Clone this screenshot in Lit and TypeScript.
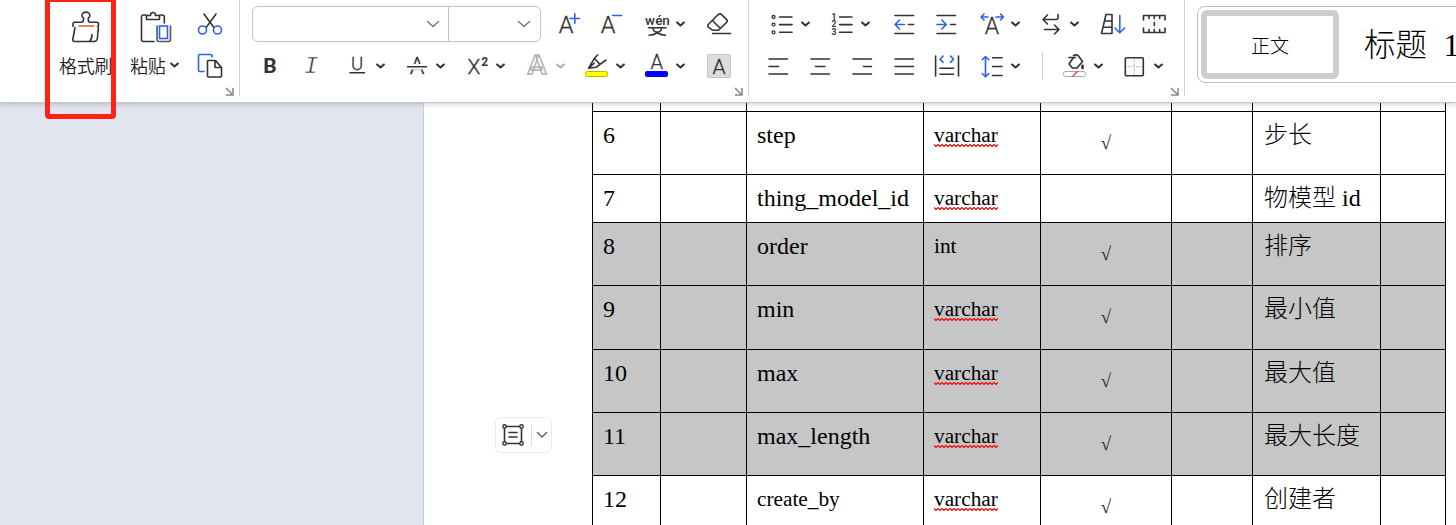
import { LitElement, html, svg, css, nothing } from "lit";
import { customElement } from "lit/decorators.js";

const INK = "#333";
const BLUE = "#2b62e8";

// Each icon is drawn in ribbon coordinates; the cell is a window of width w onto them.
const cell = (x: number, w: number, y: number, body: unknown, h = 42) =>
  html`<svg class="ic" width=${w} height=${h} viewBox="${x} ${y} ${w} ${h}">${body}</svg>`;
const line = (d: string, color = INK, w = 1.6) =>
  svg`<path d=${d} fill="none" stroke=${color} stroke-width=${w} stroke-linecap="round" stroke-linejoin="round"/>`;
const chev = (x: number, y: number, color = INK) =>
  line(`M${x - 3.4} ${y - 1.5}l3.4 3 3.4-3`, color, 2.1);
const glyph = (x: number, y: number, size: number, ch: string, cls = "g", color = INK) =>
  svg`<text class=${cls} x=${x} y=${y} font-size=${size} fill=${color} text-anchor="middle">${ch}</text>`;

const T = 3;
const B = 45;

const brush = cell(59, 54, 3, svg`
  ${line("M73 26.500V23.800q0-1.600 1.600-1.600h6.600q2.300 0 2.300-2.200v-1.800q-1.600-1-1.600-2.600a4 3.500 0 0 1 8 0q0 1.600-1.600 2.600v1.800q0 2.200 2.300 2.200h6.300q1.600 0 1.600 1.600v1.700q0 1-1 1M75 27.500L72.800 39.500q0 2 1.700 2H94q3 0 3.400-3.500L98.400 27.500M92 34.500q0 4.500-2.500 7")}
  ${line("M79 26h14.500", "#d4622a")}`);
const paste = cell(130, 50, 3, svg`
  ${line("M146 15h-2.500q-2 0-2 2v22.500q0 2 2 2H154M160 15h2q2.300 0 2.300 2v6")}
  ${line("M146.500 19.500v-4h4q0-3 2.500-3t2.500 3h4v4z")}
  ${line("M157 26v13.500q0 2 2 2h9.500q2 0 2-2V26", "#555")}
  <rect x="159.500" y="26" width="8" height="12.500" fill="none" stroke=${BLUE} stroke-width="1.600"/>`);
const cut = cell(197, 26, 3, svg`
  ${line("M204 14l9.500 13M216 14l-9.500 13")}
  <circle cx="202.500" cy="30" r="4" fill="none" stroke=${BLUE} stroke-width="1.600"/>
  <circle cx="217.500" cy="30" r="4" fill="none" stroke=${BLUE} stroke-width="1.600"/>`);
const copy = cell(197, 26, B, svg`
  ${line("M204 71.500h-4.500q-1 0-1-1V55.500q0-1 1-1H211q1 0 1 1V57", BLUE)}
  ${line("M208 60.500h7.500l6 7v8.500q0 1-1 1H208.500q-1 0-1-1V61.500q0-1 .5-1zM215 60.500v7h6.500")}`);

const fontTop = [
  cell(551, 42, T, svg`${glyph(566, 33, 23.5, "A")}${line("M570 18.500h9.500M574.800 13.700v9.600", BLUE)}`),
  cell(593, 42, T, svg`${glyph(608, 33, 23.5, "A")}${line("M612.500 15.500h9", BLUE)}`),
  cell(635, 56, T, svg`${glyph(657.5, 25, 13.5, "wén", "w")}${line("M648.500 27.800h17.500M653 28.500a4.300 4.300 0 0 0 8.500 0M649 35.300q4.500-.3 8.300-2.600q3.800 2.300 8.200 2.600")}${chev(680.5, 24)}`),
  cell(691, 50, T, svg`${line("M708.300 24.500l9.700-9.700q2-1.800 3.800 0l4.500 4.300q1.800 1.800 0 3.600l-7.800 7.500h-6l-4.200-3q-1-1.300 0-2.700zM712.700 20.800l7.500 7.500M712.500 33.500h18")}`),
];
const fontBottom = [
  cell(252, 36, B, glyph(270, 73, 21, "B", "b")),
  cell(288, 48, B, svg`<text class="i" x="311.300" y="73" font-size="24" text-anchor="middle">I</text>`),
  cell(336, 60, B, svg`${glyph(357, 69.500, 18.5, "U")}${line("M350 72.800h14.500")}${chev(380.5, 66)}`),
  cell(396, 60, B, svg`${glyph(417, 73.5, 23.5, "A")}<path d="M406 66.700h22" stroke="#fff" stroke-width="5.500"/>${line("M407.500 66.700h19")}${chev(440.5, 66)}`),
  cell(456, 60, B, svg`${glyph(474, 74, 21, "X")}${glyph(484.8, 66, 12, "2", "b")}${chev(500.5, 66)}`),
  cell(516, 60, B, svg`<text class="o" x="527.500" y="74" font-size="25" textLength="19" lengthAdjust="spacingAndGlyphs">A</text>${chev(560.5, 66, "#b0b0b0")}`),
  cell(576, 60, B, svg`${line("M597.700 55l-3.400 3.300-5.800 10 7.500-1L606 60M594.300 58.300l5.700 6.200M589 68l5.200-5")}
    <rect x="585.500" y="71.500" width="22" height="5" rx="1.800" fill="#ff0" stroke="#b9b900"/>${chev(620.5, 66)}`),
  cell(636, 60, B, svg`${glyph(656.7, 69, 20, "A")}<rect x="645" y="71" width="23" height="6" rx="2" fill="#00f"/>${chev(680.5, 66)}`),
  cell(696, 45, B, svg`<rect x="707.500" y="54.500" width="23" height="23" rx="1" fill="#dcdcdc" stroke="#c6c6c6"/>${glyph(719, 73.5, 21, "A")}`),
];
const rules = (a: number, b: number, c: number, d: number) =>
  line(`M${a} 59h${b - a}M${c} 66.500h${d - c}M${a} 74h${b - a}`);
const paraTop = [
  cell(761, 60, T, svg`${[17, 24.6, 32.3].map((y) => svg`<circle cx="773.500" cy=${y} r="1.500" fill="none" stroke=${INK} stroke-width="1.300"/>`)}
    ${line("M779.500 17h12.500M779.500 24.600h12.500M779.500 32.300h12.500")}${chev(805.5, 24)}`),
  cell(821, 62, T, svg`${["1", "2", "3"].map((n, k) => glyph(834, 19.5 + k * 7.6, 8.5, n, "b"))}
    ${line("M839.500 17h12.500M839.500 24.600h12.500M839.500 32.300h12.500")}${chev(865.5, 24)}`),
  cell(883, 42, T, svg`${line("M895 15.500h18.500M908.500 24.500h5M895 33.500h18.500")}${line("M904.500 24.500h-9M899.500 20l-4.500 4.500 4.500 4.500", BLUE)}`),
  cell(925, 42, T, svg`${line("M937 15.500h18.500M950.500 24.500h5M937 33.500h18.500")}${line("M937 24.500h9M941.800 20l4.500 4.500-4.500 4.500", BLUE)}`),
  cell(967, 60, T, svg`${glyph(992, 34, 23, "A")}${line("M988 17h-7M984 14l-3 3 3 3M996 17h7.500M1000.500 14l3 3-3 3", BLUE)}${chev(1015.5, 24)}`),
  cell(1027, 64, T, svg`${line("M1058 14.500v3q0 2-2 2h-13M1047.500 15l-4.500 4.500 4.500 4.500M1044.500 29.500h14.500M1054.500 25l4.500 4.500-4.500 4.500")}${chev(1074.5, 24)}`),
  cell(1091, 40, T, svg`${line("M1112 14.500v19h-10.500l4.500-19zM1104.500 21h7.500M1103 27.300h9")}${line("M1119.800 15.500v17M1115 28l4.800 4.800 4.800-4.800", BLUE)}`),
  cell(1131, 46, T, svg`${line("M1143.500 20V15.500h21.500V20M1143.500 28v4.500h21.500V28M1149 16v2.500M1154.300 16v2.500M1159.700 16v2.500M1149 32v-2.500M1154.300 32v-2.500M1159.700 32v-2.500M1154.300 22.500v3")}`),
];
const paraBottom = [
  cell(761, 38, B, rules(769, 787.5, 769, 778.5)),
  cell(799, 42, B, rules(811, 829.5, 815.5, 825)),
  cell(841, 42, B, rules(853, 871.5, 863.5, 871.5)),
  cell(883, 42, B, rules(895, 913.5, 895, 913.5)),
  cell(925, 48, B, svg`${line("M935.600 56v20M958.500 56v20M940 68.300h13.500M940 74.300h13.500")}${line("M943 56l-3 3.200 3 3.200M950.500 56l3 3.200-3 3.200", BLUE)}`),
  cell(973, 60, B, svg`${line("M985.500 57v19M982.200 59.700l3.300-3.200 3.300 3.200M982.200 73.500l3.300 3.200 3.300-3.200", BLUE)}${line("M992.500 57.700h9.500M992.500 66.500h9.500M992.500 75.500h9.500")}${chev(1015.5, 66)}`),
  cell(1033, 20, B, svg`<path d="M1042.500 52v27.500" stroke="#d0d0d0"/>`),
  cell(1053, 60, B, svg`${line("M1069 57.500h6.500M1073.500 55.500q3-1.500 5 .5l4 5.500-5.500 6.500h-4.500l-3.500-4 4.500-6.500")}
    ${line("M1082.500 65.800v2.200", INK, 2.6)}
    <rect x="1063.500" y="71.500" width="22" height="5" rx="2" fill="#fff" stroke="#a8a8a8"/>${line("M1073 76l4.500-4.500", "#e33", 1.3)}${chev(1098.5, 66)}`),
  cell(1113, 60, B, svg`<path d="M1134.300 59v16M1127 66.700h15.500" stroke="#bbb" stroke-dasharray="3 1.500"/>
    <rect x="1125.300" y="57.800" width="18" height="18" rx="1" fill="none" stroke=${INK} stroke-width="1.600"/>${chev(1158.5, 66)}`),
];
const launcher = html`<svg class="launch" width="9" height="9" viewBox="0 0 9 9"><path d="M1 1l6 6M8 1v7H1" fill="none" stroke="#888" stroke-width="1.500"/></svg>`;
const thinChev = html`<svg width="14" height="8" viewBox="0 0 14 8">${line("M1.500 1.500l5.500 5 5.500-5", "#777", 1.4)}</svg>`;

interface Row { n: string; name: string; type: string; tick: boolean; note: string; h: number; sel?: boolean; small?: boolean }
const ROWS: Row[] = [
  { n: "6", name: "step", type: "varchar", tick: true, note: "步长", h: 63 },
  { n: "7", name: "thing_model_id", type: "varchar", tick: false, note: "物模型 id", h: 48 },
  { n: "8", name: "order", type: "int", tick: true, note: "排序", h: 63, sel: true },
  { n: "9", name: "min", type: "varchar", tick: true, note: "最小值", h: 64, sel: true },
  { n: "10", name: "max", type: "varchar", tick: true, note: "最大值", h: 63, sel: true },
  { n: "11", name: "max_length", type: "varchar", tick: true, note: "最大长度", h: 63, sel: true },
  { n: "12", name: "create_by", type: "varchar", tick: true, note: "创建者", h: 63, small: true },
];

@customElement("ribbon-bar")
export class RibbonBar extends LitElement {
  static styles = css`
    :host { display: flex; height: 102px; background: #fff; border-bottom: 1px solid #c4c4cf; box-shadow: 0 1px 5px rgba(60, 60, 90, 0.25); position: relative; z-index: 1; font-family: Roboto, "Noto Sans CJK SC", sans-serif; color: #222; box-sizing: content-box; }
    .group { display: flex; height: 96px; box-sizing: border-box; border-right: 1px solid #d4d4d4; position: relative; flex: none; }
    .ic { display: block; flex: none; }
    .launch { position: absolute; right: 5px; bottom: 0; }
    .clip { width: 240px; padding: 3px 0 0 59px; }
    .tool { display: flex; flex-direction: column; }
    .label { font: 18px/40px "Noto Sans CJK SC", sans-serif; letter-spacing: -0.2px; font-weight: 350; white-space: nowrap; display: flex; height: 40px; align-items: center; }
    .t1 { width: 71px; }
    .t2 { width: 67px; }
    .font { width: 509px; padding: 3px 0 0 12px; flex-direction: column; }
    .row { display: flex; height: 42px; }
    .combo { display: flex; width: 289px; height: 36px; margin: 3px 10px 0 0; box-sizing: border-box; border: 1px solid #c2c2c2; border-radius: 6px; flex: none; }
    .combo div { display: flex; align-items: center; justify-content: flex-end; box-sizing: border-box; }
    .family { width: 196px; padding-right: 8px; border-right: 1px solid #c2c2c2; }
    .size { flex: 1; padding-right: 9px; }
    .para { width: 436px; padding: 3px 0 0 12px; flex-direction: column; }
    .styles { flex: 1; padding: 6px 0 0 12px; overflow: hidden; }
    .gallery { display: flex; width: 300px; height: 77px; box-sizing: border-box; border: 1px solid #bdbdbd; border-radius: 8px; padding: 3px; font-family: "Liberation Serif", "Noto Sans CJK SC", serif; font-weight: 300; color: #000; }
    .on { width: 138px; height: 69px; box-sizing: border-box; border: 6px solid #cecece; border-radius: 6px; display: flex; align-items: center; justify-content: center; font-size: 19px; padding-bottom: 1px; }
    .head { margin-left: 25px; font-size: 31.500px; line-height: 71px; height: 69px; word-spacing: 8.500px; white-space: nowrap; }
    .g { font-family: Roboto, sans-serif; font-weight: 300; stroke: #333; stroke-width: 0.300px; }
    .b { font-family: Roboto, sans-serif; font-weight: 700; }
    .w { font-family: Roboto, sans-serif; font-weight: 500; }
    .i { font-family: "Liberation Mono", monospace; font-style: italic; fill: #333; stroke: #fff; stroke-width: 0.500px; }
    .o { font-family: Roboto, sans-serif; font-weight: 700; fill: none; stroke: #b4b4b4; stroke-width: 1.300px; }
  `;
  render() {
    return html`
      <div class="group clip">
        <div class="tool t1">${brush}<div class="label">格式刷</div></div>
        <div class="tool t2">${paste}<div class="label">粘贴${cell(166, 16, 46, chev(174.5, 66), 40)}</div></div>
        <div class="tool">${cut}${copy}</div>
        ${launcher}
      </div>
      <div class="group font">
        <div class="row">
          <div class="combo"><div class="family">${thinChev}</div><div class="size">${thinChev}</div></div>
          ${fontTop}
        </div>
        <div class="row">${fontBottom}</div>
        ${launcher}
      </div>
      <div class="group para">
        <div class="row">${paraTop}</div>
        <div class="row">${paraBottom}</div>
        ${launcher}
      </div>
      <div class="styles">
        <div class="gallery"><div class="on">正文</div><div class="head">标题 1</div></div>
      </div>`;
  }
}

@customElement("doc-view")
export class DocView extends LitElement {
  static styles = css`
    :host { display: flex; height: 422px; overflow: hidden; background: #e0e5ee; }
    .desk { width: 423px; flex: none; border-right: 1px solid #c9cdd6; }
    .page { display: flex; flex: 1; background: #fff; }
    .margin { width: 168px; flex: none; box-sizing: border-box; padding: 314px 0 0 71px; }
    .float { display: flex; align-items: center; width: 57px; height: 36px; box-sizing: border-box; border: 1px solid #ebebeb; border-radius: 6px; padding-left: 5px; }
    .sep { width: 1px; height: 21px; background: #dcdcdc; margin: 0 4px 0 6px; }
    .table { width: 854px; flex: none; }
    .tr { display: grid; grid-template-columns: 68px 86px 177px 117px 131px 81px 128px 65px; width: 853px; border-right: 1px solid #000; }
    .td { box-sizing: border-box; border-left: 1px solid #000; border-top: 1px solid #000; padding: 8px 0 0 10px; font: 300 24px/30px "Liberation Serif", "Noto Sans CJK SC", serif; white-space: nowrap; color: #000; overflow: hidden; }
    .first .td { border-top: 0; }
    .sel { background: #c6c6c6; }
    .s { font-size: 21.300px; }
    .note { padding-left: 11px; }
    .tick { font-size: 19px; text-align: center; padding: 16px 0 0; color: #222; }
    .wave { display: inline-block; height: 27px; background: url("data:image/svg+xml,%3Csvg xmlns='http://www.w3.org/2000/svg' width='4' height='3'%3E%3Cpath d='M-1 1.500L0 .5L2 2.500L4 .5L5 1.500' fill='none' stroke='red' stroke-width='1.200'/%3E%3C/svg%3E") repeat-x left bottom; }
  `;
  render() {
    return html`
      <div class="desk"></div>
      <div class="page">
        <div class="margin">
          <div class="float">
            <svg width="24" height="24" viewBox="0 0 24 24">
              ${line("M3.500 4v16M20.500 4v16M4 3.500h16M4 20.500h16M8 9.500h8M8 14h8")}
              ${[3.5, 20.5].map((x) => [3.5, 20.5].map((y) => svg`<circle cx=${x} cy=${y} r="1.700" fill="#fff" stroke=${INK} stroke-width="1.400"/>`))}
            </svg>
            <span class="sep"></span>
            <svg width="12" height="8" viewBox="0 0 12 8">${line("M1.500 1.500L6 6l4.500-4.500", "#666", 1.5)}</svg>
          </div>
        </div>
        <div class="table">
          <div class="tr first" style="height:8px">${Array.from({ length: 8 }, () => html`<div class="td"></div>`)}</div>
          ${ROWS.map((r) => html`
            <div class="tr ${r.sel ? "sel" : ""}" style="height:${r.h}px">
              <div class="td">${r.n}</div>
              <div class="td"></div>
              <div class="td ${r.small ? "s" : ""}">${r.name}</div>
              <div class="td s">${r.type === "varchar" ? html`<span class="wave">${r.type}</span>` : r.type}</div>
              <div class="td tick">${r.tick ? "√" : nothing}</div>
              <div class="td"></div>
              <div class="td note">${r.note}</div>
              <div class="td"></div>
            </div>`)}
        </div>
      </div>`;
  }
}

@customElement("app-root")
export class AppRoot extends LitElement {
  static styles = css`
    :host { display: block; position: relative; width: 1456px; height: 525px; overflow: hidden; background: #fff; }
    .mark { position: absolute; z-index: 2; left: 45px; top: -3px; width: 71px; height: 122px; box-sizing: border-box; border: 5px solid #ff2114; border-radius: 4px; }
  `;
  render() {
    return html`<ribbon-bar></ribbon-bar><doc-view></doc-view><div class="mark"></div>`;
  }
}
